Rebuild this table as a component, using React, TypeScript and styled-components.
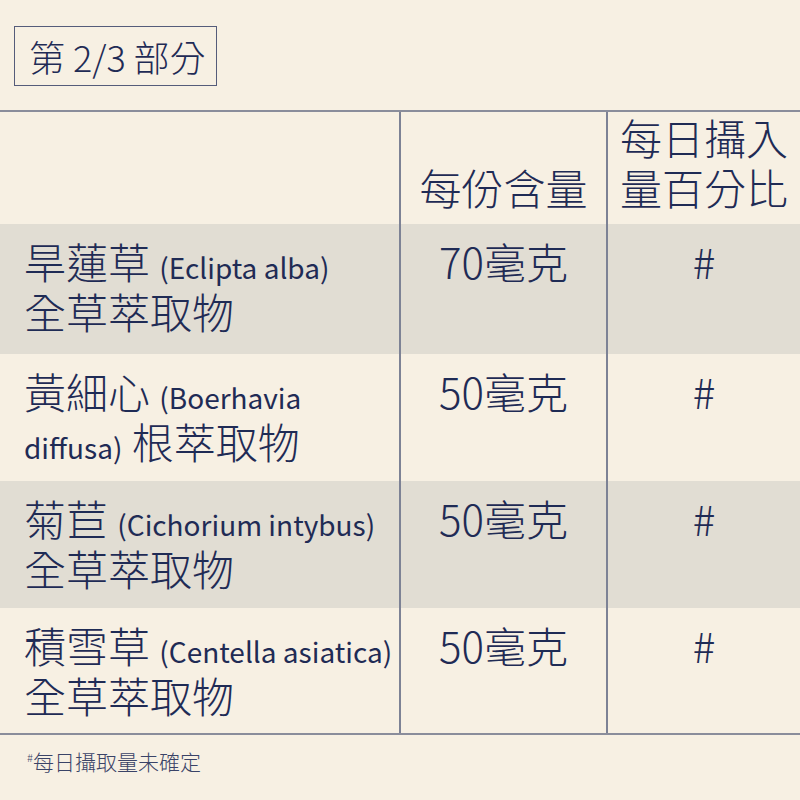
import * as React from 'react';
import styled, { createGlobalStyle } from 'styled-components';

const GlobalStyle = createGlobalStyle`
  html, body {
    margin: 0;
    padding: 0;
    background: #f7f0e3;
  }
  body {
    font-family: "Noto Sans CJK TC Light", "Noto Sans CJK TC", "Noto Sans", sans-serif;
    font-weight: 300;
    color: #1f2b55;
  }
`;

const Page = styled.div`
  width: 800px;
  height: 800px;
  background: #f7f0e3;
  display: flex;
  flex-direction: column;
  overflow: hidden;
`;

const TopBar = styled.div`
  flex-shrink: 0;
  height: 110px;
  padding: 26px 0 0 14px;
  box-sizing: border-box;
`;

const PartLabel = styled.div`
  display: inline-flex;
  align-items: center;
  height: 60px;
  box-sizing: border-box;
  padding: 0 10px 0 14px;
  border: 1px solid #555c7a;
  font-size: 36px;
  line-height: 1;
  white-space: pre;
`;

const Table = styled.table`
  flex-shrink: 0;
  width: 800px;
  border-collapse: collapse;
  table-layout: fixed;
`;

const HeadCell = styled.th`
  font-weight: 300;
  font-size: 42px;
  line-height: 50px;
  text-align: center;
  vertical-align: bottom;
  padding: 0 0 12px;
  border-top: 2px solid #8a8d9b;
  height: 113px;
  box-sizing: border-box;
  & + & {
    border-left: 2px solid #7d8295;
  }
`;

const Row = styled.tr<{ $shaded?: boolean }>`
  background: ${(p) => (p.$shaded ? '#e1ddd3' : 'transparent')};
  &:last-child td {
    border-bottom: 2px solid #8a8d9b;
  }
`;

const Cell = styled.td<{ $first?: boolean; $h: number }>`
  height: ${(p) => p.$h}px;
  box-sizing: border-box;
  font-size: 42px;
  line-height: 50px;
  vertical-align: top;
  text-align: ${(p) => (p.$first ? 'left' : 'center')};
  padding: ${(p) => (p.$first ? '12px 4px 0 24px' : '12px 0 0')};
  & + & {
    border-left: 2px solid #7d8295;
  }
`;

const Latin = styled.span`
  font-family: "Noto Sans CJK TC", "Noto Sans", sans-serif;
  font-size: 28px;
  font-weight: 400;
  line-height: 1;
`;

const Footnote = styled.div`
  flex-shrink: 0;
  padding: 12px 0 0 27px;
  font-size: 21px;
  line-height: 28px;
  color: #3a4367;
`;

const Mark = styled.sup`
  font-size: 11px;
  vertical-align: 8px;
  line-height: 0;
`;

type Item = { zh: string; latin: string; rest: string; amount: string; h: number };

const items: Item[] = [
  { zh: '旱蓮草', latin: '(Eclipta alba)', rest: '全草萃取物', amount: '70毫克', h: 130 },
  { zh: '黃細心', latin: '(Boerhavia', rest: 'diffusa) 根萃取物', amount: '50毫克', h: 127 },
  { zh: '菊苣', latin: '(Cichorium intybus)', rest: '全草萃取物', amount: '50毫克', h: 127 },
  { zh: '積雪草', latin: '(Centella asiatica)', rest: '全草萃取物', amount: '50毫克', h: 126 },
];

const Second: React.FC<{ text: string }> = ({ text }) => {
  if (text.startsWith('diffusa)')) {
    return (
      <>
        <Latin>diffusa)</Latin> 根萃取物
      </>
    );
  }
  return <>{text}</>;
};

const App: React.FC = () => (
  <Page>
    <GlobalStyle />
    <TopBar>
      <PartLabel>第 2/3 部分</PartLabel>
    </TopBar>
    <Table>
      <colgroup>
        <col style={{ width: 400 }} />
        <col style={{ width: 207 }} />
        <col style={{ width: 193 }} />
      </colgroup>
      <thead>
        <tr>
          <HeadCell />
          <HeadCell>每份含量</HeadCell>
          <HeadCell>
            每日攝入
            <br />
            量百分比
          </HeadCell>
        </tr>
      </thead>
      <tbody>
        {items.map((it, i) => (
          <Row key={it.zh} $shaded={i % 2 === 0}>
            <Cell $first $h={it.h}>
              {it.zh} <Latin>{it.latin}</Latin>
              <br />
              <Second text={it.rest} />
            </Cell>
            <Cell $h={it.h}>{it.amount}</Cell>
            <Cell $h={it.h}>#</Cell>
          </Row>
        ))}
      </tbody>
    </Table>
    <Footnote>
      <Mark>#</Mark>每日攝取量未確定
    </Footnote>
  </Page>
);

export default App;
